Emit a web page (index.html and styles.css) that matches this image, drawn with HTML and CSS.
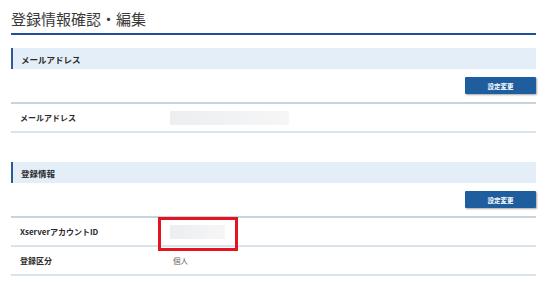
FILE: index.html
```html
<!DOCTYPE html>
<html lang="ja">
<head>
<meta charset="utf-8">
<link rel="stylesheet" href="styles.css">
</head>
<body>
<div class="page">
  <h1 class="title">登録情報確認・編集</h1>

  <section class="section">
    <h2 class="sec-head">メールアドレス</h2>
    <div class="actions"><button class="btn">設定変更</button></div>
    <div class="table">
      <div class="row">
        <div class="label">メールアドレス</div>
        <div class="value"><span class="blur blur-wide"></span></div>
      </div>
    </div>
  </section>

  <section class="section">
    <h2 class="sec-head">登録情報</h2>
    <div class="actions"><button class="btn">設定変更</button></div>
    <div class="table">
      <div class="row">
        <div class="label">XserverアカウントID</div>
        <div class="value"><span class="blur blur-short"></span><span class="highlight"></span></div>
      </div>
      <div class="row">
        <div class="label">登録区分</div>
        <div class="value text">個人</div>
      </div>
    </div>
  </section>
</div>
</body>
</html>
```

FILE: styles.css
```css
* { box-sizing: border-box; }
html, body { margin: 0; padding: 0; background: #fff; }
body {
  font-family: "Noto Sans CJK JP", "Noto Sans", sans-serif;
  color: #333;
}
.page {
  width: 536px;
  padding-left: 11px;
}
.title {
  margin: 0;
  padding-top: 8px;
  padding-bottom: 3px;
  font-size: 15px;
  line-height: 22px;
  font-weight: normal;
  color: #3a3a3a;
  border-bottom: 2px solid #1d4f9c;
}
.section { margin-top: 13px; }
.section + .section { margin-top: 29px; }
.sec-head {
  margin: 0;
  height: 21px;
  padding-left: 8px;
  display: flex;
  align-items: center;
  font-size: 8.5px;
  font-weight: bold;
  color: #2a2a2a;
  background: #e4eef8;
  border-left: 2px solid #2e5b8f;
}
.actions {
  display: flex;
  justify-content: flex-end;
  margin-top: 8px;
}
.btn {
  width: 71px;
  height: 17px;
  padding: 0;
  border: 0;
  border-radius: 1px;
  background: #1e5e9f;
  color: #fff;
  font-family: inherit;
  font-size: 6.5px;
  font-weight: bold;
  box-shadow: 1px 1px 2px rgba(0,0,0,0.35);
}
.table {
  margin-top: 8px;
  border-top: 2px solid #c6d4e0;
}
.row {
  display: flex;
  align-items: center;
  height: 29px;
  border-bottom: 2px solid #dbe3ea;
}
.label {
  width: 159px;
  padding-left: 9px;
  font-size: 8px;
  font-weight: bold;
  color: #2a2a2a;
}
.value {
  position: relative;
  flex: 1;
  display: flex;
  align-items: center;
  height: 100%;
}
.value.text {
  padding-left: 3px;
  font-size: 7.5px;
  color: #666;
}
.blur {
  display: block;
  height: 14px;
  background: linear-gradient(90deg, #eceef0, #f1f2f4 50%, #f6f6f6);
}
.blur-wide { width: 119px; }
.blur-short { width: 55px; }
.highlight {
  position: absolute;
  left: -12px;
  top: -1px;
  width: 80px;
  height: 34px;
  border: 3px solid #e3141e;
}
```
